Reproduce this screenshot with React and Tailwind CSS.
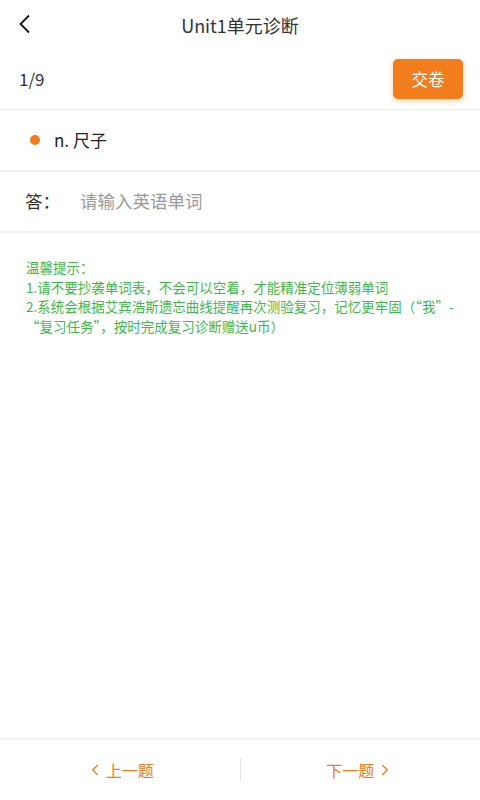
import { ChevronLeft, ChevronRight } from "lucide-react";

const font = { fontFamily: '"Noto Sans CJK SC", Roboto, sans-serif' };

export default function App() {
  return (
    <div
      className="flex flex-col w-[480px] h-[800px] bg-white text-[#222]"
      style={font}
    >
      {/* header */}
      <div className="relative flex items-center justify-center h-[49px] shrink-0">
        <svg
          className="absolute left-[18px] top-[14px]"
          width="14"
          height="20"
          viewBox="0 0 14 20"
          fill="none"
        >
          <path d="M11 1.5 L2.5 10 L11 18.5" stroke="#111" strokeWidth="1.8" />
        </svg>
        <h1 className="text-[18px] text-[#333] leading-none">Unit1单元诊断</h1>
      </div>

      {/* progress */}
      <div className="flex items-center justify-between h-[61px] pl-[19px] pr-[17px] border-b border-[#ececec] shrink-0">
        <span className="text-[17px] text-[#333]">1/9</span>
        <button className="w-[70px] h-[40px] rounded-[5px] bg-[#f27d1c] text-white text-[16.5px] shadow-[0_2px_6px_rgba(242,125,28,0.35)]">
          交卷
        </button>
      </div>

      {/* question */}
      <div className="flex items-center h-[62px] pl-[30px] border-b-2 border-[#f2f2f2] shrink-0">
        <span className="w-[10px] h-[10px] rounded-full bg-[#f27d1c]"></span>
        <span className="ml-[14px] text-[17px] text-[#222]">n. 尺子</span>
      </div>

      {/* answer */}
      <div className="flex items-center h-[61px] pl-[25px] border-b-2 border-[#f2f2f2] shrink-0">
        <span className="text-[17.5px] text-[#333] w-[55px]">答：</span>
        <input
          className="flex-1 outline-none text-[17.5px] placeholder:text-[#9a9a9a] bg-transparent"
          placeholder="请输入英语单词"
          style={font}
        />
      </div>

      {/* tips */}
      <div className="px-[26px] pt-[25px] text-[13.5px] leading-[19.5px] text-[#3fb84a]">
        <p>温馨提示：</p>
        <p>1.请不要抄袭单词表，不会可以空着，才能精准定位薄弱单词</p>
        <p>2.系统会根据艾宾浩斯遗忘曲线提醒再次测验复习，记忆更牢固（“我”-</p>
        <p>“复习任务”，按时完成复习诊断赠送u币）</p>
      </div>

      <div className="flex-1"></div>

      {/* bottom nav */}
      <div className="flex items-center h-[62px] border-t-2 border-[#f5f5f5] shrink-0">
        <button className="flex-1 flex items-center justify-center text-[#f27d1c] text-[16px]">
          <ChevronLeft className="w-[18px] h-[18px] mr-[2px]" strokeWidth={1.8} />
          上一题
        </button>
        <div className="w-px h-[24px] bg-[#e6e6e6]"></div>
        <button className="flex-1 flex items-center justify-center text-[#f27d1c] text-[16px]">
          下一题
          <ChevronRight className="w-[18px] h-[18px] ml-[2px]" strokeWidth={1.8} />
        </button>
      </div>
    </div>
  );
}
